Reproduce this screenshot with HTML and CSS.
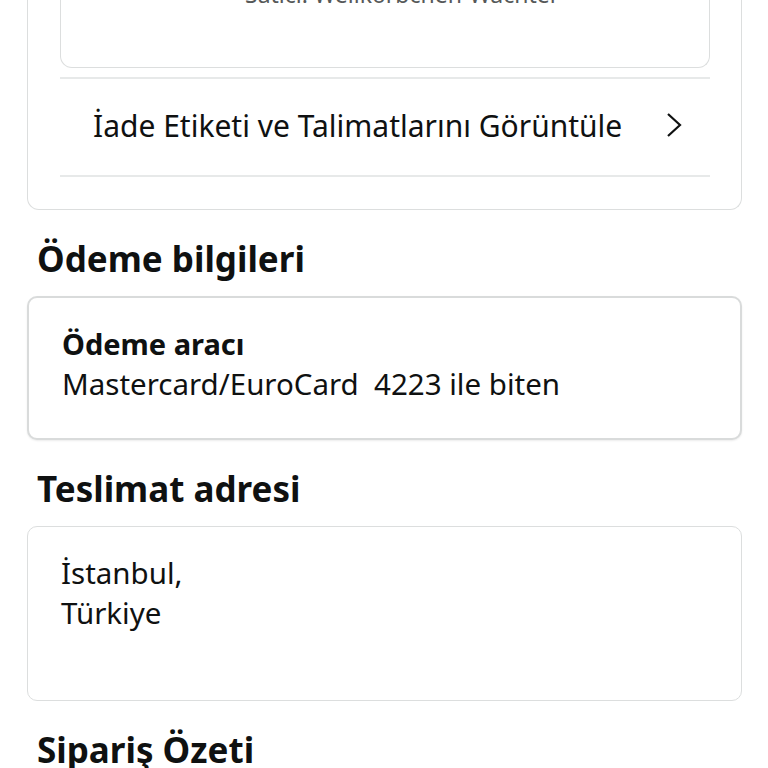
FILE: index.html
```html
<!DOCTYPE html>
<html lang="tr">
<head>
    <meta charset="UTF-8">
    <meta name="viewport" content="width=device-width, initial-scale=1.0">
    <title>Sipariş ayrıntıları</title>
    <link rel="stylesheet" href="styles.css">
</head>
<body>
    <div class="page">
        <section class="card returns">
            <div class="seller-box">
                <p class="seller">Satıcı: Wellkörbchen-Wächter</p>
            </div>
            <a class="link-row" href="#">
                <span>İade Etiketi ve Talimatlarını Görüntüle</span>
                <svg class="chevron" width="18" height="26" viewBox="0 0 18 26" fill="none" stroke="#0f1111" stroke-width="2.2">
                    <path d="M3 2l12 11L3 24"/>
                </svg>
            </a>
        </section>

        <h2 class="section-title">Ödeme bilgileri</h2>
        <section class="card payment">
            <p class="label">Ödeme aracı</p>
            <p class="value">Mastercard/EuroCard&nbsp; 4223 ile biten</p>
        </section>

        <h2 class="section-title">Teslimat adresi</h2>
        <section class="card address">
            <p class="value">İstanbul,</p>
            <p class="value">Türkiye</p>
        </section>

        <h2 class="section-title">Sipariş Özeti</h2>
    </div>
</body>
</html>
```

FILE: styles.css
```css
:root {
    --text-color: #0f1111;
    --muted-color: #565959;
    --border-color: #dcdede;
}
body {
    margin: 0;
    background-color: #fff;
    color: var(--text-color);
    font-family: 'Noto Sans', sans-serif;
    overflow: hidden;
}
p {
    margin: 0;
}
.page {
    padding: 0 26px 0 27px;
}
.card {
    border: 1px solid var(--border-color);
    border-radius: 10px;
    background-color: #fff;
}
.returns {
    margin-top: -60px;
    border-top: none;
    border-radius: 0 0 12px 12px;
    padding: 0 31px 32px 32px;
}
.seller-box {
    height: 128px;
    border: 1px solid var(--border-color);
    border-top: none;
    border-radius: 0 0 12px 12px;
    box-sizing: border-box;
    padding-left: 184px;
}
.seller {
    font-size: 23px;
    line-height: 30px;
    color: var(--muted-color);
    padding-top: 39px;
}
.link-row {
    display: flex;
    align-items: center;
    justify-content: space-between;
    margin-top: 9px;
    border-top: 2px solid #e7e9e9;
    border-bottom: 2px solid #e7e9e9;
    padding: 0 27px 4px 33px;
    height: 92px;
    color: var(--text-color);
    text-decoration: none;
    font-size: 30px;
}
.section-title {
    font-size: 35px;
    line-height: 40px;
    font-weight: bold;
    margin: 29px 0 17px 10px;
}
.payment {
    border: 2px solid #d9dbdb;
    box-shadow: 0 1px 2px rgba(0, 0, 0, 0.08);
    padding: 26px 33px 34px;
}
.label {
    font-size: 29px;
    line-height: 40px;
    font-weight: bold;
}
.value {
    font-size: 29.5px;
    line-height: 40px;
}
.address {
    height: 175px;
    box-sizing: border-box;
    padding: 26px 33px;
}
```
